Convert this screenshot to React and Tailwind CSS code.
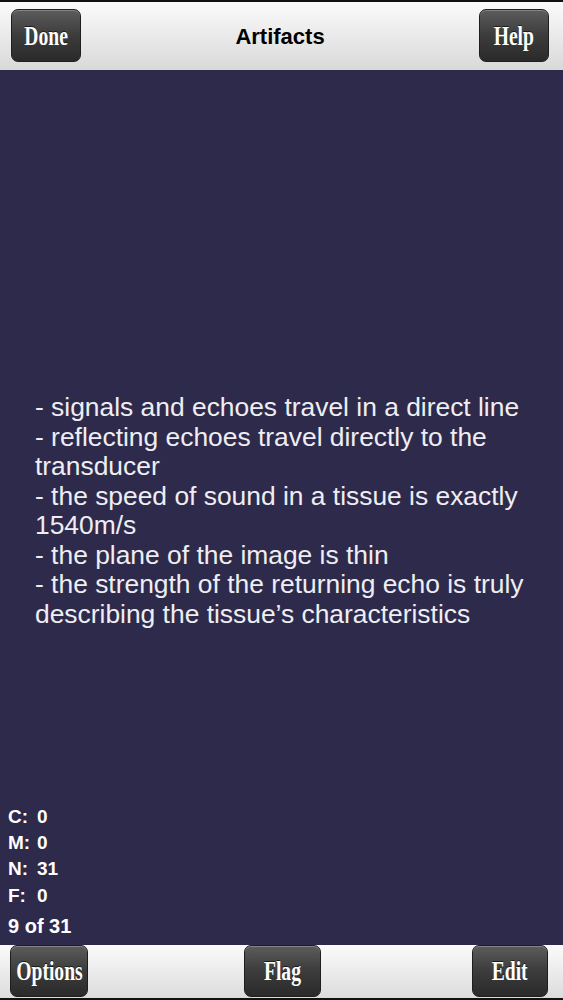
import React from 'react';

const lines = [
  '- signals and echoes travel in a direct line',
  '- reflecting echoes travel directly to the transducer',
  '- the speed of sound in a tissue is exactly 1540m/s',
  '- the plane of the image is thin',
  '- the strength of the returning echo is truly describing the tissue\u2019s characteristics',
];

const stats = [
  { label: 'C:', value: '0' },
  { label: 'M:', value: '0' },
  { label: 'N:', value: '31' },
  { label: 'F:', value: '0' },
];

const BarButton = ({ children, className = '' }) => (
  <button
    type="button"
    className={`flex items-center justify-center rounded-[7px] border border-[#1e1e1e] bg-gradient-to-b from-[#5c5c5c] via-[#3c3c3c] to-[#2a2a2a] shadow-[inset_0_1px_0_rgba(255,255,255,0.25)] ${className}`}
  >
    <span className="inline-block scale-x-[0.7] text-[28px] font-bold leading-none text-white [font-family:'Liberation_Serif',serif] [text-shadow:0_-1px_0_rgba(0,0,0,0.6)]">
      {children}
    </span>
  </button>
);

export default function App() {
  return (
    <div className="flex h-[1000px] w-full flex-col overflow-hidden bg-[#2e2a4c] [font-family:'Liberation_Sans',Arial,sans-serif]">
      {/* top bar */}
      <div className="flex h-[70px] shrink-0 items-start justify-between border-t-2 border-[#111] bg-gradient-to-b from-[#fbfbfb] to-[#d9d9d9] pl-[11px] pr-[14px] pt-[7px]">
        <BarButton className="h-[53px] w-[70px]">Done</BarButton>
        <h1 className="mt-[15px] text-[22px] font-bold leading-[26px] text-black">Artifacts</h1>
        <BarButton className="h-[53px] w-[70px]">Help</BarButton>
      </div>

      {/* content */}
      <div className="flex flex-1 flex-col">
        <div className="pl-[35px] pr-[26px] pt-[323px] text-[26.4px] leading-[29.5px] text-[#eeeef2]">
          {lines.map((l) => (
            <p key={l}>{l}</p>
          ))}
        </div>

        <div className="mt-auto pb-[6px] pl-2 text-[19px] font-bold text-white">
          {stats.map((s) => (
            <div key={s.label} className="flex leading-[26.3px]">
              <span className="w-[29px]">{s.label}</span>
              <span>{s.value}</span>
            </div>
          ))}
          <div className="mt-[4px] text-[20px] leading-[26px]">9 of 31</div>
        </div>
      </div>

      {/* bottom bar */}
      <div className="flex h-[55px] shrink-0 items-start justify-between border-b-2 border-[#111] bg-gradient-to-b from-[#fbfbfb] to-[#dcdcdc] pl-[10px] pr-[15px] pt-[0px]">
        <BarButton className="h-[52px] w-[78px]">Options</BarButton>
        <BarButton className="ml-[4px] h-[52px] w-[77px]">Flag</BarButton>
        <BarButton className="h-[52px] w-[76px]">Edit</BarButton>
      </div>
    </div>
  );
}
